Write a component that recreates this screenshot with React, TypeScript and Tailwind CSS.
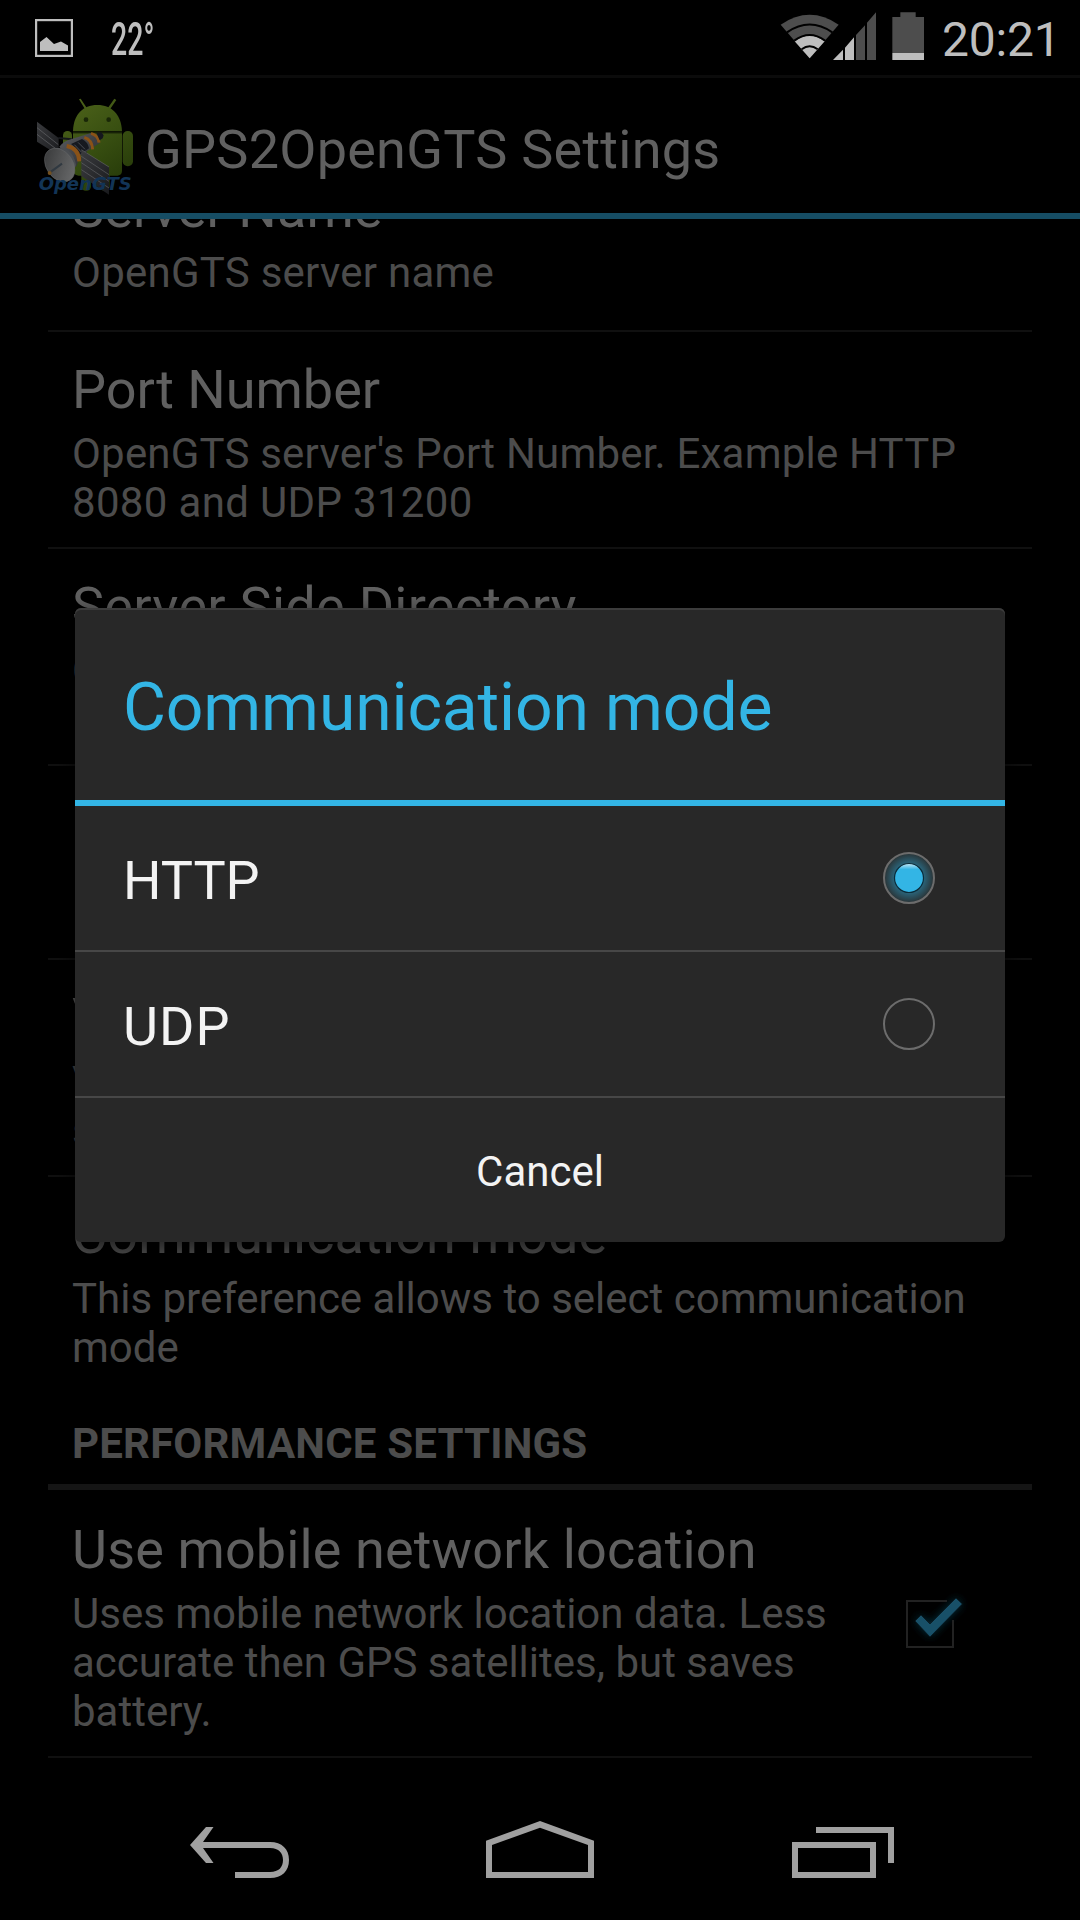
import React from 'react';

function StatusBar() {
  return (
    <div className="flex h-[75px] shrink-0 items-start justify-between">
      <div className="flex">
        <svg className="ml-[35px] mt-[19px]" width="38" height="38" viewBox="0 0 38 38">
          <rect x="1.1" y="1.1" width="35.8" height="35.8" fill="none" stroke="#bebebe" strokeWidth="2.2" />
          <path d="M5 32V23L11.5 18L19 25L26 22.500L33 26.500V32Z" fill="#bebebe" />
        </svg>
        <span className="ml-[38px] mt-[12px] h-[54px] w-[50px] origin-left scale-x-[0.62] whitespace-nowrap text-[46px] font-medium leading-[54px] text-[#bebebe]">22°</span>
      </div>
      <div className="flex">
        <svg width="184" height="75" viewBox="0 0 552 225">
          <path d="M62 74Q149 15 236 74L149 175Z" fill="#4d4d4d" />
          <path d="M104 124Q149 90 194 124L149 175Z" fill="#bebebe" />
          <path d="M81 97Q149 50 217 97M103 122Q149 88 195 122M125 148Q149 129 173 148" fill="none" stroke="#000" strokeWidth="6" />
          <path d="M219 180L249 149V180ZM255 143L282 112V180H255Z" fill="#bebebe" />
          <path d="M288 105L315 76V180H288ZM321 68L348 37V180H321Z" fill="#4d4d4d" />
          <path d="M397 51H421V37H467V51H492V159H397Z" fill="#4d4d4d" />
          <path d="M397 159H492V180H397Z" fill="#bebebe" />
        </svg>
        <span className="ml-[-2px] mr-[26px] mt-[12px] w-[112px] whitespace-nowrap text-[48px] leading-[56px] tracking-[-0.2px] text-[#bebebe]">20:21</span>
      </div>
    </div>
  );
}

function AppIcon() {
  return (
    <svg width="130" height="130" viewBox="0 0 390 390" className="shrink-0">
      <defs>
        <linearGradient id="green" gradientUnits="userSpaceOnUse" x1="159" y1="75" x2="320" y2="300">
          <stop offset="0" stopColor="#4b6119" />
          <stop offset=".5" stopColor="#384f11" />
          <stop offset="1" stopColor="#263a09" />
        </linearGradient>
        <linearGradient id="dish" x1="0" y1="0" x2=".6" y2="1">
          <stop offset="0" stopColor="#343536" />
          <stop offset="1" stopColor="#666768" />
        </linearGradient>
        <linearGradient id="panel" x1="0" y1="0" x2="1" y2="1">
          <stop offset="0" stopColor="#3a3b3e" />
          <stop offset="1" stopColor="#191a1d" />
        </linearGradient>
        <linearGradient id="tube" x1="0" y1="0" x2="1" y2="1">
          <stop offset="0" stopColor="#5b5d61" />
          <stop offset="1" stopColor="#24262a" />
        </linearGradient>
      </defs>
      <g fill="url(#green)">
        <path d="M177 58L182 56L203 88L197 91ZM283 56L289 60L269 89L263 85Z" />
        <path d="M159 154C160 105 188 75 232 75C276 75 304 105 306 154Z" />
        <path d="M159 160H306V273Q306 285 293 287H176Q159 285 159 270Z" />
        <rect x="129" y="153" width="27" height="105" rx="13" />
        <rect x="308" y="153" width="31" height="106" rx="15" />
        <rect x="184" y="270" width="29" height="62" rx="13" />
        <rect x="240" y="270" width="29" height="62" rx="13" />
      </g>
      <circle cx="198" cy="119" r="7" fill="#192707" />
      <circle cx="266" cy="119" r="7" fill="#192707" />
      <path d="M159 157H306" stroke="#1c2b08" strokeWidth="3" />
      <path d="M115 174L155 178M190 201L205 235" stroke="#15171b" strokeWidth="6" />
      <path d="M51 125L116 174V226L51 185Z" fill="url(#panel)" />
      <path d="M51 143L115 194M51 163L115 212" stroke="#65676a" strokeWidth="2" />
      <path d="M118 200Q130 184 155 177L213 159Q236 162 240 188L182 226L168 262Z" fill="url(#tube)" />
      <path d="M153 192L186 177Q204 186 207 205L178 224Q170 204 153 192Z" fill="#16191f" />
      <path d="M163 194L184 216M174 187L195 208" stroke="#4b4e54" strokeWidth="3" />
      <path d="M140 198Q176 204 178 244" fill="none" stroke="#8a5217" strokeWidth="12" />
      <path d="M193 172Q216 179 218 208M213 160Q235 166 237 188" fill="none" stroke="#8a5217" strokeWidth="9" />
      <path d="M229 158L244 157L251 166L248 175L239 181Z" fill="#15171d" />
      <path d="M110 204Q158 200 168 254L153 298Z" fill="#4a4d51" />
      <ellipse cx="119" cy="255" rx="40" ry="55" transform="rotate(-35 119 255)" fill="url(#dish)" stroke="#646668" strokeWidth="1.500" />
      <path d="M89 278L126 251" stroke="#303941" strokeWidth="6" />
      <circle cx="89" cy="279" r="6" fill="#73501f" />
      <path d="M184 209L267 261V344L184 288Z" fill="url(#panel)" />
      <path d="M184 229L267 284M184 248L267 304M184 269L267 324M184 209L267 261" stroke="#606265" strokeWidth="2" />
      <text x="56" y="331" textLength="279" lengthAdjust="spacingAndGlyphs" fontFamily="DejaVu Sans" fontSize="53" fontStyle="italic" fontWeight="bold" fill="#123456">OpenGTS</text>
    </svg>
  );
}

function Title({ children, tracking = 'tracking-normal' }: { children: React.ReactNode; tracking?: string }) {
  return <div className={`h-16 whitespace-nowrap text-[54px] leading-[64px] text-[#606060] ${tracking}`}>{children}</div>;
}

type Line = [text: string, tracking?: string];

function Summary({ lines }: { lines: Line[] }) {
  return (
    <div className="mt-[7px] text-[42px] leading-[49px] text-[#4c4c4c]">
      {lines.map(([text, tracking]) => (
        <div key={text} className={`whitespace-nowrap ${tracking ?? ''}`}>{text}</div>
      ))}
    </div>
  );
}

function Row({ title, lines, tracking }: { title: string; lines: Line[]; tracking?: string }) {
  return (
    <div className="h-[217px] shrink-0 border-b-2 border-[#101010] px-6 pt-[26px]">
      <Title tracking={tracking}>{title}</Title>
      <Summary lines={lines} />
    </div>
  );
}

function Checkbox() {
  return (
    <svg className="ml-auto mr-[56px] mt-[72px] shrink-0" width="80" height="80" viewBox="0 0 240 240">
      <defs>
        <filter id="glow" x="-40%" y="-40%" width="180%" height="180%">
          <feGaussianBlur stdDeviation="12" />
        </filter>
      </defs>
      <g transform="translate(-48 -30)">
        <path d="M105 123L123 105L150 132L228 54L247 72L150 171Z" fill="#0d3a4b" filter="url(#glow)" opacity=".8" />
        <path d="M201 63H81V201H219V120" fill="none" stroke="#222" strokeWidth="6" />
        <path d="M105 123L123 105L150 132L228 54L247 72L150 171Z" fill="#185068" stroke="#061017" strokeWidth="2" />
      </g>
    </svg>
  );
}

function Radio({ checked }: { checked?: boolean }) {
  return (
    <svg width="56" height="56" viewBox="-28 -28 56 56">
      <defs>
        <radialGradient id="halo">
          <stop offset=".5" stopColor="#2a6f89" />
          <stop offset="1" stopColor="#2a3234" />
        </radialGradient>
        <linearGradient id="dot" x1="0" y1="0" x2="0" y2="1">
          <stop offset="0" stopColor="#c5e8f6" />
          <stop offset=".2" stopColor="#33b5e5" />
        </linearGradient>
      </defs>
      <circle r="25" fill={checked ? 'url(#halo)' : 'none'} stroke="#6c6c6c" strokeWidth="2" />
      {checked && <circle r="14.500" fill="url(#dot)" stroke="#0c2c39" strokeWidth="1.200" />}
    </svg>
  );
}

function Option({ label, checked, tracking = '' }: { label: string; checked?: boolean; tracking?: string }) {
  return (
    <div className="flex h-[146px] items-center justify-between border-b-2 border-[#474747] pl-12 pr-[68px]">
      <span className={`pt-[6px] text-[54px] leading-[64px] text-[#f3f3f3] ${tracking}`}>{label}</span>
      <Radio checked={checked} />
    </div>
  );
}

function Dialog() {
  return (
    <div className="absolute left-[75px] top-[608px] h-[634px] w-[930px] overflow-hidden rounded-[6px] bg-[#282828] shadow-[0_8px_20px_4px_rgba(0,0,0,0.6),inset_0_2px_0_#3c3c3c]">
      <div className="h-[198px] border-b-[6px] border-[#33b5e5] pl-12 pt-[61px]">
        <span className="block whitespace-nowrap text-[66px] leading-[78px] tracking-[-0.12px] text-[#33b5e5]">Communication mode</span>
      </div>
      <Option label="HTTP" checked />
      <Option label="UDP" tracking="tracking-[1px]" />
      <div className="flex h-36 items-center justify-center pt-[2px] text-[42px] text-[#f3f3f3]">Cancel</div>
    </div>
  );
}

function NavBar() {
  return (
    <div className="flex h-36 shrink-0 items-center pl-[190px]">
      <svg width="99" height="60" viewBox="190 1818 99 60">
        <path d="M206 1827H213.500L203 1842H270C282 1842 289 1849 289 1860C289 1871 282 1878 270 1878H235V1872H270C279 1872 283 1867 283 1860C283 1853 279 1848 270 1848H203L213.500 1863H206L190 1845Z" fill="#a0a0a0" />
      </svg>
      <svg width="108" height="60" viewBox="486 1818 108 60" className="ml-[197px]">
        <path fillRule="evenodd" d="M486 1840.700L540 1821L594 1840.700V1878H486ZM492 1845V1872H588V1845L540 1827.700Z" fill="#a0a0a0" />
      </svg>
      <svg width="102" height="60" viewBox="792 1818 102 60" className="ml-[198px]">
        <path d="M816 1830H891V1863M795 1845H873V1875H795Z" fill="none" stroke="#a0a0a0" strokeWidth="6" />
      </svg>
    </div>
  );
}

export default function App() {
  return (
    <div className="relative flex h-[1920px] w-[1080px] flex-col overflow-hidden bg-black font-['Roboto',sans-serif]">
      <StatusBar />
      <header className="flex h-36 shrink-0 border-b-[6px] border-t-[3px] border-[#164d64] border-t-[#0b0b0b] pl-5">
        <div className="mt-[2px] h-[130px]"><AppIcon /></div>
        <h1 className="ml-[-5px] mt-[40px] whitespace-nowrap text-[54px] leading-[64px] tracking-[0.25px] text-[#606060]">GPS2OpenGTS Settings</h1>
      </header>
      <main className="flex h-[1557px] shrink-0 flex-col overflow-hidden px-12">
        <div className="-mt-[42px] h-[155px] shrink-0 border-b-2 border-[#101010] px-6">
          <Title tracking="tracking-[0.1px]">Server Name</Title>
          <Summary lines={[['OpenGTS server name', 'tracking-[0.25px]']]} />
        </div>
        <Row
          title="Port Number"
          lines={[
            ["OpenGTS server's Port Number. Example HTTP", 'tracking-[0.2px]'],
            ['8080 and UDP 31200', 'tracking-[0.33px]'],
          ]}
        />
        <Row title="Server Side Directory" tracking="tracking-[0.28px]" lines={[['OpenGTS server']]} />
        <div className="h-[194px] shrink-0 border-b-2 border-[#101010]" />
        <Row title="Vehicle" lines={[['Vehicle'], ['server']]} />
        <div className="h-[215px] shrink-0 px-6 pt-[26px]">
          <Title tracking="tracking-[0.12px]">Communication mode</Title>
          <Summary lines={[['This preference allows to select communication'], ['mode']]} />
        </div>
        <div className="h-[98px] shrink-0 border-b-[6px] border-[#151515] px-6 pt-[27px] text-[42px] font-bold leading-[49px] tracking-[0.18px] text-[#4c4c4c]">PERFORMANCE SETTINGS</div>
        <div className="flex h-[268px] shrink-0 border-b-2 border-[#101010] pl-6 pt-[28px]">
          <div>
            <Title tracking="tracking-[0.13px]">Use mobile network location</Title>
            <Summary lines={[['Uses mobile network location data. Less'], ['accurate then GPS satellites, but saves'], ['battery.']]} />
          </div>
          <Checkbox />
        </div>
      </main>
      <NavBar />
      <Dialog />
    </div>
  );
}
